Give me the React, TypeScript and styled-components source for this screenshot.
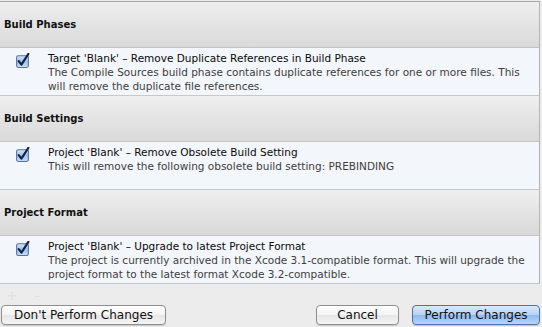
import React from "react";
import styled, { createGlobalStyle } from "styled-components";

const GlobalStyle = createGlobalStyle`
  html, body {
    margin: 0;
    padding: 0;
    background: #ececec;
  }
  body {
    font-family: "DejaVu Sans", "Liberation Sans", sans-serif;
    -webkit-font-smoothing: antialiased;
  }
`;

const Window = styled.div`
  width: 542px;
  height: 327px;
  background: #ececec;
  display: flex;
  flex-direction: column;
  overflow: hidden;
`;

const List = styled.div`
  margin-top: 1px;
  width: 539px;
  border-top: 1px solid #a9a9a9;
  border-right: 1px solid #b4b4b4;
  display: flex;
  flex-direction: column;
`;

const SectionHeader = styled.div`
  height: 45px;
  display: flex;
  align-items: center;
  padding-left: 4px;
  border-bottom: 1px solid #c4c4c4;
  background: linear-gradient(#efefef, #e6e6e6 40%, #d9d9d9);
  font-weight: bold;
  font-size: 10px;
  color: #111;
`;

const Item = styled.div`
  min-height: 44px;
  padding-top: 3px;
  display: flex;
  align-items: flex-start;
  background: #f3f6fa;
  border-bottom: 1px solid #c8c8c8;
`;

const CheckCell = styled.div`
  width: 48px;
  padding: 2px 0 0 15px;
  box-sizing: border-box;
  flex-shrink: 0;
`;

const Texts = styled.div`
  display: flex;
  flex-direction: column;
  font-size: 10.5px;
  line-height: 14px;
`;

const Title = styled.div`
  color: #0a0a0a;
`;

const Description = styled.div`
  color: #3e3e3e;
  width: 485px;
`;

const Tools = styled.div`
  height: 21px;
  padding-left: 6px;
  display: flex;
  align-items: center;
  gap: 16px;
  color: #e0e0e0;
  font-size: 14px;
`;

const Footer = styled.div`
  display: flex;
  align-items: center;
  padding: 0 2px 0 1px;
`;

const Spacer = styled.div`
  flex: 1;
`;

const Button = styled.button<{ $primary?: boolean; $width: number; $gap?: number }>`
  height: 20px;
  padding: 0;
  width: ${(p) => p.$width}px;
  margin-left: ${(p) => p.$gap || 0}px;
  border-radius: 4px;
  border: 1px solid ${(p) => (p.$primary ? "#4f72a3" : "#8e8e8e")};
  background: ${(p) =>
    p.$primary
      ? "linear-gradient(#dbe9fb, #b6d2f4 48%, #8fb9ee 52%, #b7d6f8)"
      : "linear-gradient(#ffffff, #f4f4f4 48%, #e6e6e6 52%, #f5f5f5)"};
  font-family: "DejaVu Sans", "Liberation Sans", sans-serif;
  font-size: 12px;
  color: #111;
  box-shadow: 0 1px 1px rgba(0, 0, 0, 0.15);
`;

const CheckBox = () => (
  <svg width="15" height="15" viewBox="0 0 14 14">
    <defs>
      <linearGradient id="cb" x1="0" y1="0" x2="0" y2="1">
        <stop offset="0" stopColor="#d5e6fa" />
        <stop offset="0.5" stopColor="#9dc2ef" />
        <stop offset="1" stopColor="#c8def8" />
      </linearGradient>
    </defs>
    <rect x="1.5" y="2.5" width="11" height="11" rx="1.5" fill="url(#cb)" stroke="#55759f" />
    <path
      d="M3.5 7.5 L6 10.8 L12.5 0.8"
      fill="none"
      stroke="#142440"
      strokeWidth="2"
      strokeLinecap="round"
      strokeLinejoin="round"
    />
  </svg>
);

const sections = [
  {
    name: "Build Phases",
    title: "Target 'Blank' – Remove Duplicate References in Build Phase",
    desc:
      "The Compile Sources build phase contains duplicate references for one or more files. This will remove the duplicate file references.",
  },
  {
    name: "Build Settings",
    title: "Project 'Blank' – Remove Obsolete Build Setting",
    desc: "This will remove the following obsolete build setting: PREBINDING",
  },
  {
    name: "Project Format",
    title: "Project 'Blank' – Upgrade to latest Project Format",
    desc:
      "The project is currently archived in the Xcode 3.1-compatible format. This will upgrade the project format to the latest format Xcode 3.2-compatible.",
  },
];

export default function App() {
  return (
    <Window>
      <GlobalStyle />
      <List>
        {sections.map((s) => (
          <React.Fragment key={s.name}>
            <SectionHeader>{s.name}</SectionHeader>
            <Item>
              <CheckCell>
                <CheckBox />
              </CheckCell>
              <Texts>
                <Title>{s.title}</Title>
                <Description>{s.desc}</Description>
              </Texts>
            </Item>
          </React.Fragment>
        ))}
      </List>
      <Tools>
        <span>+</span>
        <span>–</span>
      </Tools>
      <Footer>
        <Button $width={165}>Don't Perform Changes</Button>
        <Spacer />
        <Button $width={83}>Cancel</Button>
        <Button $primary $width={128} $gap={13}>
          Perform Changes
        </Button>
      </Footer>
    </Window>
  );
}
